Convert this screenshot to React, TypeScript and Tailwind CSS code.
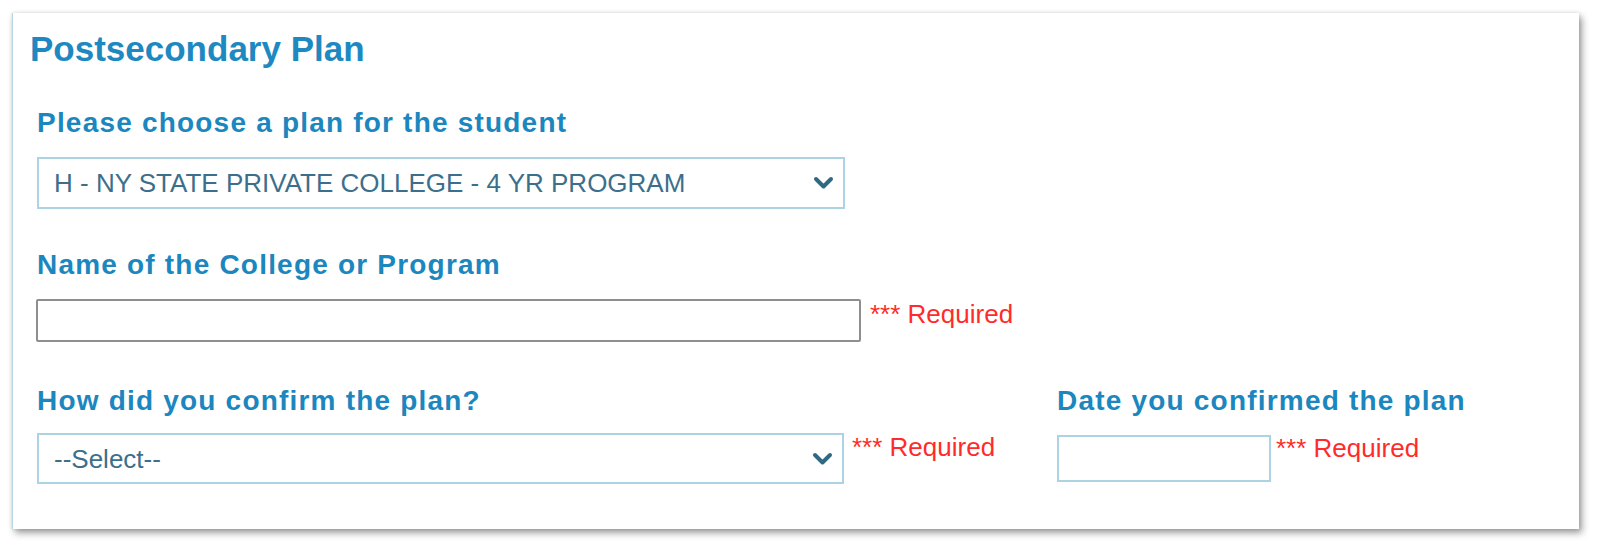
import React from 'react';

function Chevron() {
  return (
    <svg width="21" height="14" viewBox="0 0 21 14" className="shrink-0">
      <polyline
        points="3,3 10.5,10.5 18,3"
        fill="none"
        stroke="#2f6a82"
        strokeWidth="4"
        strokeLinecap="round"
        strokeLinejoin="round"
      />
    </svg>
  );
}

function FakeSelect({ value, className }: { value: string; className: string }) {
  return (
    <div
      className={`flex items-center justify-between bg-white border-2 border-[#acd3e4] pl-[15px] pr-[9px] text-[26px] text-[#3c6f8b] ${className}`}
    >
      <span className="leading-[30px] whitespace-nowrap">{value}</span>
      <Chevron />
    </div>
  );
}

function Required({ className }: { className: string }) {
  return (
    <span className={`text-[26px] leading-[30px] text-[#ff2b2b] whitespace-nowrap ${className}`}>
      *** Required
    </span>
  );
}

const label = "text-[28px] leading-[32px] font-bold tracking-[1.2px] text-[#1b87be] whitespace-nowrap";

export default function App() {
  return (
    <div className="bg-white min-h-[559px] w-[1600px] pt-[13px] pl-[12px] font-['Liberation_Sans',Arial,sans-serif]">
      <div className="w-[1567px] h-[516px] bg-white border-l border-[#b9d5e6] shadow-[0_0_4px_rgba(0,0,0,0.12),3px_4px_7px_rgba(0,0,0,0.38)] pt-[16px] pl-[17px]">
        <h2 className="text-[35px] leading-[40px] font-bold text-[#1e89c1]">Postsecondary Plan</h2>

        <div className="pl-[7px]">
          <div className={`mt-[38px] ${label}`}>Please choose a plan for the student</div>
          <FakeSelect value="H - NY STATE PRIVATE COLLEGE - 4 YR PROGRAM" className="mt-[18px] w-[808px] h-[52px]" />

          <div className={`mt-[40px] ${label}`}>Name of the College or Program</div>
          <div className="mt-[18px] flex items-start">
            <input
              type="text"
              className="-ml-px w-[825px] h-[43px] bg-white border-2 border-[#8e8e8e] rounded-[2px] outline-none"
            />
            <Required className="ml-[9px]" />
          </div>

          <div className="mt-[43px] flex">
            <div className="w-[1020px]">
              <div className={label}>How did you confirm the plan?</div>
              <div className="mt-[16px] flex items-start">
                <FakeSelect value="--Select--" className="w-[807px] h-[51px]" />
                <Required className="ml-[8px] -mt-px" />
              </div>
            </div>
            <div>
              <div className={label}>Date you confirmed the plan</div>
              <div className="mt-[18px] flex items-start">
                <input
                  type="text"
                  className="w-[214px] h-[47px] bg-white border-2 border-[#acd3e4] outline-none"
                />
                <Required className="ml-[5px] -mt-[2px]" />
              </div>
            </div>
          </div>
        </div>
      </div>
    </div>
  );
}
